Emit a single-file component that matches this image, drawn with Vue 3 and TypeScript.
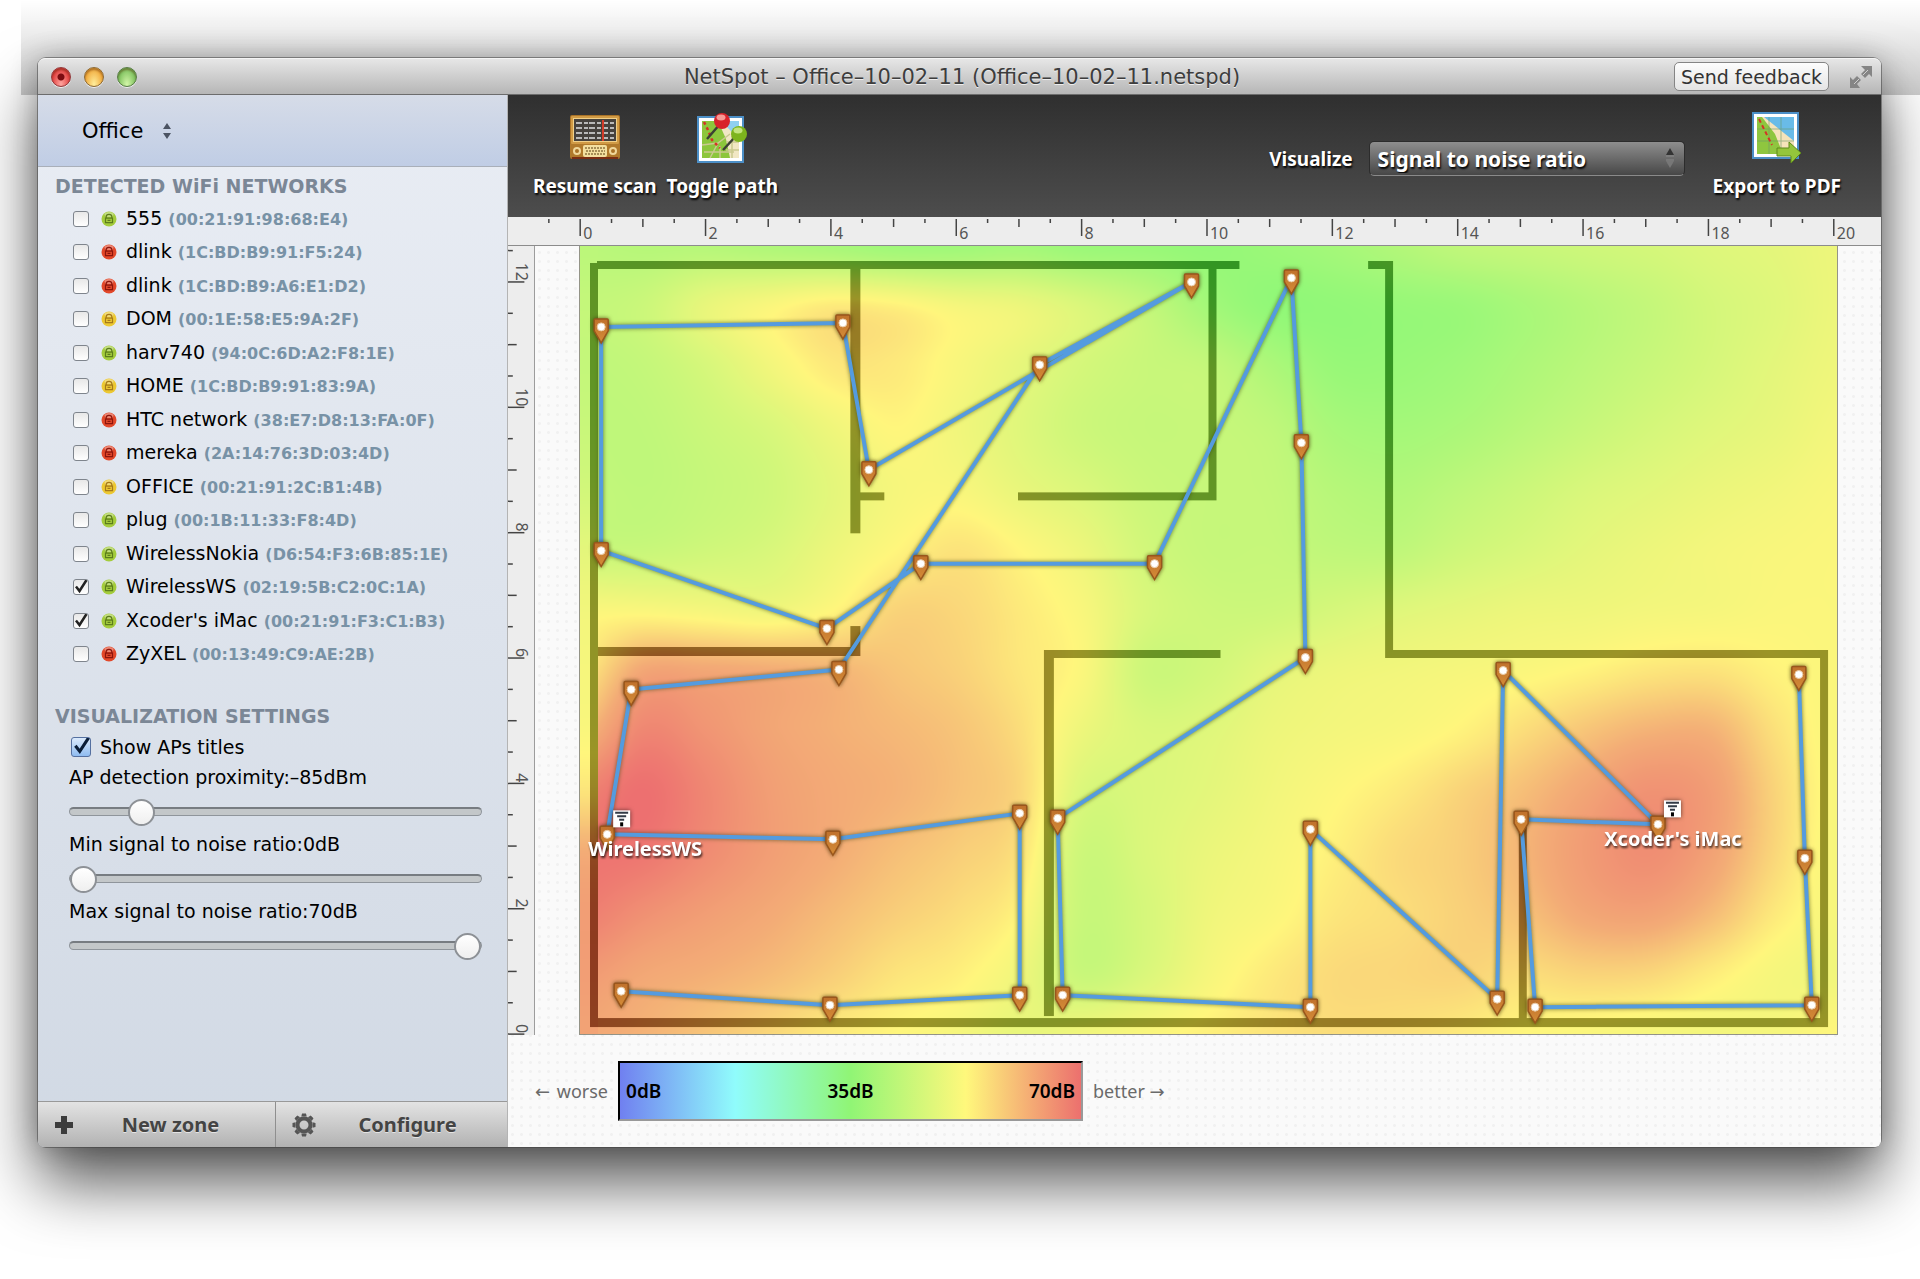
<script setup lang="ts">
import { onMounted, ref } from 'vue'

type Level = 'good' | 'fair' | 'poor'
interface Network { name: string; mac: string; level: Level; on: boolean }
type Point = [number, number]

const networks = ref<Network[]>([
  { name: '555', mac: '00:21:91:98:68:E4', level: 'good', on: false },
  { name: 'dlink', mac: '1C:BD:B9:91:F5:24', level: 'poor', on: false },
  { name: 'dlink', mac: '1C:BD:B9:A6:E1:D2', level: 'poor', on: false },
  { name: 'DOM', mac: '00:1E:58:E5:9A:2F', level: 'fair', on: false },
  { name: 'harv740', mac: '94:0C:6D:A2:F8:1E', level: 'good', on: false },
  { name: 'HOME', mac: '1C:BD:B9:91:83:9A', level: 'fair', on: false },
  { name: 'HTC network', mac: '38:E7:D8:13:FA:0F', level: 'poor', on: false },
  { name: 'mereka', mac: '2A:14:76:3D:03:4D', level: 'poor', on: false },
  { name: 'OFFICE', mac: '00:21:91:2C:B1:4B', level: 'fair', on: false },
  { name: 'plug', mac: '00:1B:11:33:F8:4D', level: 'good', on: false },
  { name: 'WirelessNokia', mac: 'D6:54:F3:6B:85:1E', level: 'good', on: false },
  { name: 'WirelessWS', mac: '02:19:5B:C2:0C:1A', level: 'good', on: true },
  { name: "Xcoder's iMac", mac: '00:21:91:F3:C1:B3', level: 'good', on: true },
  { name: 'ZyXEL', mac: '00:13:49:C9:AE:2B', level: 'poor', on: false },
])

const showTitles = ref(true)
const proximity = ref(-85)
const minRatio = ref(0)
const maxRatio = ref(70)

/* Floor plan geometry; the plan is 1260 x 790 with its origin at the top left. */
const PLAN_W = 1260
const PLAN_H = 790
const UNIT = 62.75

const walls: [number, number, number, number][] = [
  [10, 17, 8, 766], [17, 15, 644, 8], [271, 15, 10, 273], [281, 247, 24, 8],
  [10, 402, 271, 9], [271, 381, 10, 29], [439, 247, 199, 8], [630, 15, 8, 240],
  [790, 15, 25, 8], [807, 15, 8, 398], [807, 405, 444, 8], [1243, 405, 8, 378],
  [10, 774, 1241, 9], [465, 405, 10, 367], [465, 405, 177, 8], [941, 574, 8, 206],
]

const route: Point[] = [
  [42, 746], [251, 760], [441, 750], [441, 568], [254, 594], [28, 589], [52, 444],
  [260, 424], [461, 119], [613, 36], [290, 224], [264, 77], [22, 81], [22, 305],
  [248, 383], [342, 318], [576, 318], [713, 32], [723, 197], [727, 412], [479, 573],
  [484, 750], [732, 762], [732, 584], [919, 754], [925, 425], [1080, 579], [943, 574],
  [957, 762], [1234, 760], [1227, 613], [1221, 429],
]
const routePoints = route.map(p => p.join(',')).join(' ')

const accessPoints = [
  { name: 'WirelessWS', x: 43, y: 574, labelX: 66 },
  { name: "Xcoder's iMac", x: 1095, y: 564, labelX: 1095 },
]

/* Signal samples on a regular grid: 0 is green, 50 yellow, 100 red. */
const field: number[][] = [
  [20, 18, 18, 15, 12, 8, 8, 10, 6, 5, 3, 6, 10, 16, 22, 25, 28, 31, 35, 38, 42],
  [24, 27, 40, 48, 54, 52, 46, 42, 34, 24, 10, 2, 2, 4, 6, 12, 18, 24, 31, 36, 42],
  [22, 24, 32, 44, 54, 54, 47, 39, 31, 26, 24, 14, 5, 5, 8, 14, 20, 26, 32, 38, 43],
  [22, 22, 27, 33, 43, 50, 44, 36, 28, 25, 25, 22, 12, 10, 13, 19, 25, 31, 36, 40, 45],
  [24, 22, 25, 29, 38, 46, 47, 40, 34, 27, 25, 24, 18, 16, 21, 27, 33, 37, 41, 44, 47],
  [26, 26, 29, 33, 42, 50, 56, 50, 42, 30, 25, 25, 22, 22, 28, 33, 38, 42, 45, 47, 48],
  [48, 48, 46, 44, 50, 61, 60, 54, 47, 33, 28, 28, 32, 36, 39, 42, 43, 45, 46, 48, 48],
  [54, 76, 76, 74, 71, 66, 62, 55, 48, 28, 30, 38, 42, 44, 46, 48, 51, 55, 56, 51, 48],
  [70, 90, 84, 77, 73, 70, 66, 58, 42, 34, 36, 42, 45, 47, 51, 58, 66, 72, 72, 57, 47],
  [92, 100, 90, 80, 75, 72, 67, 60, 34, 34, 38, 44, 49, 54, 61, 68, 77, 85, 80, 61, 47],
  [98, 97, 88, 80, 74, 68, 63, 56, 28, 34, 41, 46, 52, 59, 63, 71, 81, 87, 78, 60, 46],
  [94, 86, 80, 75, 69, 63, 58, 50, 26, 32, 43, 48, 55, 58, 62, 67, 76, 78, 69, 54, 46],
  [82, 76, 73, 69, 63, 56, 52, 43, 26, 34, 46, 54, 59, 60, 61, 58, 61, 60, 53, 46, 44],
  [76, 72, 66, 60, 54, 50, 46, 40, 44, 48, 52, 56, 58, 57, 54, 50, 48, 46, 45, 46, 50],
]
/* Samples along the narrow strip under and outside the west wall. */
const westStrip = [20, 24, 24, 26, 30, 38, 44, 46, 48, 56, 74, 80, 80, 78]

function spline(a: number, b: number, c: number, d: number, t: number): number {
  return b + 0.5 * t * (c - a + t * (2 * a - 5 * b + 4 * c - d + t * (3 * (b - c) + d - a)))
}
function pick(row: number[], i: number): number {
  return row[Math.max(0, Math.min(row.length - 1, i))]
}
function along(row: number[], pos: number): number {
  const i = Math.floor(pos)
  return spline(pick(row, i - 1), pick(row, i), pick(row, i + 1), pick(row, i + 2), pos - i)
}

const stops = [[142, 248, 120], [255, 246, 124], [243, 172, 118], [237, 112, 112]]
const stopAt = [0, 50, 74, 100]
function colour(value: number): number[] {
  const v = Math.max(0, Math.min(100, value))
  let k = 0
  while (k < 2 && v > stopAt[k + 1]) k++
  const t = (v - stopAt[k]) / (stopAt[k + 1] - stopAt[k])
  return stops[k].map((s, n) => s + (stops[k + 1][n] - s) * t)
}

const heat = ref<HTMLCanvasElement | null>(null)
onMounted(() => {
  const ctx = heat.value?.getContext('2d')
  if (!ctx) return
  const image = ctx.createImageData(PLAN_W, PLAN_H)
  for (let y = 0; y < PLAN_H; y++) {
    const fy = (y / PLAN_H) * (field.length - 1)
    const column = field[0].map((_, c) => along(field.map(r => r[c]), fy))
    const strip = along(westStrip, fy)
    for (let x = 0; x < PLAN_W; x++) {
      const value = x < 18 ? strip : along(column, (x / PLAN_W) * (column.length - 1))
      const [r, g, b] = colour(value)
      const at = (y * PLAN_W + x) * 4
      image.data[at] = r
      image.data[at + 1] = g
      image.data[at + 2] = b
      image.data[at + 3] = 255
    }
  }
  ctx.putImageData(image, 0, 0)
  ctx.globalCompositeOperation = 'difference'
  ctx.fillStyle = 'rgb(100, 98, 85)'
  const shape = new Path2D()
  walls.forEach(([x, y, w, h]) => shape.rect(x, y, w, h))
  ctx.fill(shape)
})

const topTicks = Array.from({ length: 42 }, (_, i) => {
  const n = i - 1
  return { x: 72 + (n * UNIT) / 2, len: n % 4 === 0 ? 17 : n % 2 === 0 ? 8 : 4, label: n % 4 === 0 ? String(n / 2) : '' }
})
const sideTicks = Array.from({ length: 26 }, (_, n) => ({
  y: 789 - (n * UNIT) / 2,
  len: n % 4 === 0 ? 17 : n % 2 === 0 ? 9 : 5,
  label: n % 4 === 0 ? String(n / 2) : '',
}))
</script>

<template>
  <div class="page">
    <div class="window">
      <header class="titlebar">
        <div class="lights">
          <button class="light close" aria-label="Close"></button>
          <button class="light minimise" aria-label="Minimise"></button>
          <button class="light zoom" aria-label="Zoom"></button>
        </div>
        <h1 class="title">NetSpot – Office–10–02–11 (Office–10–02–11.netspd)</h1>
        <div class="titlebar-end">
          <button class="feedback">Send feedback</button>
          <button class="fullscreen" aria-label="Full screen">
            <svg width="24" height="24" viewBox="0 0 24 24">
              <path d="M12 1h11v11l-3-3-4 4-4-4 4-4zM1 12l3 3 4-4 4 4-4 4 3 4H1z" fill="#858585" />
              <path d="M14 10l5-5M5 19l5-5" stroke="#d0d0d0" stroke-width="1" />
            </svg>
          </button>
        </div>
      </header>

      <div class="body">
        <aside class="sidebar">
          <div class="zone">
            <select class="zone-select" aria-label="Zone"><option>Office</option></select>
            <svg class="zone-arrows" width="10" height="18" viewBox="0 0 10 18">
              <path d="M5 1l4 6H1zM5 17l4-6H1z" fill="#4b5362" />
            </svg>
          </div>

          <section class="networks">
            <h2 class="heading">DETECTED WiFi NETWORKS</h2>
            <ul class="list">
              <li v-for="n in networks" :key="n.mac">
                <label class="row">
                  <input v-model="n.on" type="checkbox" class="check" />
                  <svg class="badge" :class="n.level" width="16" height="16" viewBox="0 0 16 16">
                    <circle class="disc" cx="8" cy="8" r="7.5" />
                    <ellipse class="shine" cx="8" cy="3.5" rx="4.5" ry="2.5" />
                    <path class="lock" d="M5.2 7V5.5a2.8 2.2 0 0 1 5.6 0V7M4.5 7.2h7v4.5h-7zM6.5 9.4h3" />
                  </svg>
                  <span class="name">{{ n.name }} <span class="mac">({{ n.mac }})</span></span>
                </label>
              </li>
            </ul>
          </section>

          <section class="settings">
            <h2 class="heading">VISUALIZATION SETTINGS</h2>
            <label class="titles"><input v-model="showTitles" type="checkbox" class="check blue" />Show APs titles</label>
            <label class="setting">AP detection proximity:{{ String(proximity).replace('-', '–') }}dBm
              <input v-model.number="proximity" type="range" min="-100" max="0" />
            </label>
            <label class="setting">Min signal to noise ratio:{{ minRatio }}dB
              <input v-model.number="minRatio" type="range" min="0" max="70" />
            </label>
            <label class="setting">Max signal to noise ratio:{{ maxRatio }}dB
              <input v-model.number="maxRatio" type="range" min="0" max="70" />
            </label>
          </section>

          <footer class="actions">
            <button class="action">
              <svg width="20" height="20" viewBox="0 0 20 20"><path d="M7 1h6v6h6v6h-6v6H7v-6H1V7h6z" fill="#3c3c3c" /></svg>
              <span>New zone</span>
            </button>
            <button class="action">
              <svg width="24" height="24" viewBox="0 0 24 24">
                <path
                  d="M10 .5h4l.7 3h-5.400zM10 23.500h4l.7-3h-5.400zM.5 10v4l3 .7v-5.400zM23.500 10v4l-3 .7v-5.400zM2.500 5.300l2.800-2.800 2.800 1.800-3.800 3.800zM21.500 5.300l-2.800-2.800-2.800 1.800 3.800 3.800zM2.500 18.700l2.800 2.800 2.800-1.800-3.800-3.800zM21.500 18.700l-2.800 2.800-2.800-1.800 3.800-3.800z"
                  fill="#555"
                />
                <circle cx="12" cy="12" r="6.500" fill="none" stroke="#555" stroke-width="4" />
              </svg>
              <span>Configure</span>
            </button>
          </footer>
        </aside>

        <main class="main">
          <div class="toolbar">
            <button class="tool">
              <svg width="52" height="51" viewBox="0 0 52 51">
                <rect x="1" y="3" width="50" height="44" rx="2" fill="#a97226" />
                <rect x="2" y="4" width="48" height="28" rx="1" fill="#d09a45" />
                <rect x="4" y="6" width="44" height="24" fill="#f0cf87" />
                <rect x="5" y="7" width="42" height="22" fill="#45413d" />
                <path d="M7 11h38M7 16h38M7 21h38M7 26h38" stroke="#b9b9b9" stroke-width="2" stroke-dasharray="6 2 4 1" />
                <path d="M34 8v21" stroke="#d43c2a" stroke-width="2" />
                <rect x="1" y="32" width="50" height="13" fill="#b0792b" />
                <rect x="14" y="33" width="24" height="12" rx="2" fill="#f3df9f" />
                <path d="M16 36h20M17 39h19M16 42h20" stroke="#8d7440" stroke-width="1.500" stroke-dasharray="2 1" />
                <circle cx="8" cy="39" r="4" fill="#f0d79a" /><circle cx="8" cy="39" r="2" fill="#a97226" />
                <circle cx="44" cy="39" r="4" fill="#f0d79a" /><circle cx="44" cy="39" r="2" fill="#a97226" />
                <path d="M3 46h46" stroke="#7a2d12" stroke-width="2" />
              </svg>
              Resume scan
            </button>
            <button class="tool">
              <svg width="52" height="51" viewBox="0 0 52 51">
                <rect x="2" y="5" width="45" height="45" fill="#fff" stroke="#4c8fc7" stroke-width="2" />
                <rect x="6" y="9" width="37" height="37" fill="#f1e7c4" />
                <path d="M24 9h19v18L30 14z" fill="#8fd0f2" />
                <path d="M6 9h16l8 18 4 19H6z" fill="#8cc63c" />
                <path d="M6 33l16-2 12-9M14 46l8-15M30 30h13M30 38h13M36 24v22M24 46V34M8 40h30" stroke="#c9c98f" stroke-width="1.500" fill="none" />
                <path d="M8 10l4 8 4 10 8 8" stroke="#d33426" stroke-width="2.500" fill="none" stroke-dasharray="3 3" />
                <path d="M24 12L11 27M40 24L27 38" stroke="#3b4034" stroke-width="2.500" />
                <circle cx="26" cy="9" r="8" fill="#d8232b" /><ellipse cx="25" cy="5.500" rx="4.500" ry="3" fill="#f69a95" />
                <circle cx="43" cy="22" r="8" fill="#7db41d" /><ellipse cx="42" cy="18.500" rx="4.500" ry="3" fill="#c3e47f" />
              </svg>
              Toggle path
            </button>
            <label class="visualize">Visualize
              <span class="picker">
                <select class="mode"><option>Signal to noise ratio</option><option>Signal level</option></select>
                <svg class="picker-arrows" width="10" height="24" viewBox="0 0 10 24">
                  <path d="M5 2l4 7H1z" fill="#333" /><path d="M5 22l4-7H1z" fill="#777" />
                  <path d="M1 10h8M1 14h8" stroke="#8a8a8a" />
                </svg>
              </span>
            </label>
            <button class="tool">
              <svg width="52" height="51" viewBox="0 0 52 51">
                <rect x="2" y="1" width="45" height="45" fill="#fff" stroke="#4c8fc7" stroke-width="2" />
                <rect x="6" y="5" width="37" height="37" fill="#69bbe8" />
                <path d="M13 5l30 24v13H6V5z" fill="#f6e3bb" />
                <path d="M6 5h5l13 17 8 20H6z" fill="#8fc63f" />
                <path d="M6 17h37M6 29h37M18 5v37M30 5v37" stroke="#6d9a68" stroke-width="1" opacity=".6" />
                <path d="M8 7l5 10 8 16" stroke="#d33426" stroke-width="2" fill="none" stroke-dasharray="4 3" />
                <path d="M26 36h12v-6l12 11-10 10v-7H26z" fill="#94c53b" stroke="#5f8a1a" />
              </svg>
              Export to PDF
            </button>
          </div>

          <svg class="ruler-top" viewBox="0 0 1374 28">
            <g v-for="t in topTicks" :key="t.x">
              <line :x1="t.x" :x2="t.x" y1="2" :y2="2 + t.len" stroke="#444" stroke-width="1.500" />
              <text v-if="t.label" :x="t.x + 3" y="22">{{ t.label }}</text>
            </g>
          </svg>

          <div class="stage">
            <svg class="ruler-side" viewBox="0 0 27 790" preserveAspectRatio="none">
              <g v-for="t in sideTicks" :key="t.y">
                <line x1="0" :x2="t.len" :y1="t.y" :y2="t.y" stroke="#444" stroke-width="1.500" />
                <text v-if="t.label" text-anchor="end" :transform="`translate(8 ${t.y - 1}) rotate(90)`">{{ t.label }}</text>
              </g>
            </svg>
            <div class="plan">
              <canvas ref="heat" class="heat" :width="PLAN_W" :height="PLAN_H"></canvas>
              <svg class="overlay" :viewBox="`0 0 ${PLAN_W} ${PLAN_H}`">
                <defs>
                  <linearGradient id="pinFill" x1="0" y1="0" x2="0" y2="1">
                    <stop offset="0" stop-color="#c0712c" /><stop offset="1" stop-color="#d48c38" />
                  </linearGradient>
                </defs>
                <polyline class="route" :points="routePoints" />
                <g v-for="([x, y], i) in route" :key="i" class="pin" :transform="`translate(${x} ${y})`">
                  <path d="M-7-7q0-1 1-1H6q1 0 1 1V4L0 16-7 4z" fill="url(#pinFill)" stroke="#99561c" stroke-width="1.500" />
                  <circle r="4" fill="#fff" stroke="#e8c9a4" />
                </g>
                <g v-for="a in accessPoints" :key="a.name">
                  <g :transform="`translate(${a.x} ${a.y})`">
                    <rect class="ap" x="-9" y="-9" width="17" height="17" fill="#fff" />
                    <path d="M-7-6.500H6M-5-3H4M-3 .5H2" stroke="#333b47" stroke-width="2" />
                    <rect x="-2" y="3" width="3" height="4" fill="#000" />
                  </g>
                  <text v-if="showTitles" class="ap-title" :x="a.labelX" :y="a.y + 37" text-anchor="middle">{{ a.name }}</text>
                </g>
              </svg>
            </div>
          </div>

          <div class="legend">
            <span class="hint"><span class="arrow">←</span> worse</span>
            <div class="scale"><span>0dB</span><span>35dB</span><span>70dB</span></div>
            <span class="hint">better <span class="arrow">→</span></span>
          </div>
        </main>
      </div>
    </div>
  </div>
</template>

<style>
body {
  background: #fff;
}
</style>

<style scoped>
* {
  box-sizing: border-box;
}
.page {
  overflow: hidden;
  padding: 58px 39px 132px 38px;
  font-family: "Noto Sans", "Open Sans", sans-serif;
  font-size: 20px;
  line-height: 26px;
  color: #000;
}
button, select, input {
  font: inherit;
  margin: 0;
}
button {
  border: 0;
  padding: 0;
  background: none;
}
.window {
  position: relative;
  border-radius: 8px;
  box-shadow: 0 0 0 1px rgba(60, 60, 60, 0.5), 0 36px 64px rgba(0, 0, 0, 0.66), 0 0 28px rgba(0, 0, 0, 0.24);
}
.window::before {
  content: "";
  position: absolute;
  z-index: -1;
  inset: -58px -39px auto -17px;
  height: 95px;
  background: linear-gradient(rgba(0, 0, 0, 0), rgba(0, 0, 0, 0.2));
}
.titlebar {
  display: grid;
  grid-template-columns: 1fr auto 1fr;
  align-items: center;
  height: 37px;
  padding: 0 8px 0 13px;
  border-radius: 7px 7px 0 0;
  border-top: 1px solid #f4f4f4;
  border-bottom: 1px solid #6c6c6c;
  background: linear-gradient(#e6e6e6, #b6b6b6);
}
.lights {
  display: flex;
  gap: 13px;
}
.light {
  width: 20px;
  height: 20px;
  border-radius: 50%;
  border: 1px solid #8d6a35;
  box-shadow: inset 0 2px 2px rgba(80, 30, 0, 0.4), 0 1px 0 #f0f0f0;
}
.close {
  border-color: #94383a;
  background: radial-gradient(circle, #7c0c10 3px, transparent 4px), radial-gradient(ellipse at 50% 90%, #ffa6a0, #e2413f 70%);
}
.minimise {
  background: radial-gradient(ellipse at 50% 90%, #ffee9c, #f0a636 75%);
}
.zoom {
  border-color: #577c45;
  background: radial-gradient(ellipse at 50% 90%, #d3f6a8, #77bd58 75%);
}
.title {
  margin: 0;
  font-family: "DejaVu Sans", sans-serif;
  font-size: 21px;
  font-weight: 400;
  color: #3d3d3d;
  text-shadow: 0 1px 0 #eee;
}
.titlebar-end {
  display: flex;
  justify-content: flex-end;
  align-items: center;
  gap: 20px;
}
.feedback {
  width: 155px;
  height: 29px;
  border: 1px solid #858585;
  border-radius: 5px;
  background: linear-gradient(#fdfdfd, #e4e4e4);
  font-family: "DejaVu Sans", sans-serif;
  font-size: 19px;
  color: #333;
  line-height: 26px;
  white-space: nowrap;
}
.fullscreen {
  display: flex;
}
.body {
  display: flex;
}
.sidebar {
  flex: 0 0 469px;
  display: flex;
  flex-direction: column;
  border-right: 1px solid #b4b4b4;
  border-radius: 0 0 0 6px;
  background: linear-gradient(#e9edf4, #d1d9e4);
  font-family: "DejaVu Sans", sans-serif;
  font-size: 19px;
}
.zone {
  display: flex;
  align-items: center;
  gap: 8px;
  height: 72px;
  padding-left: 44px;
  border-bottom: 1px solid #a9afb9;
  background: linear-gradient(#d6dce8, #c0cde5);
}
.zone-select {
  appearance: none;
  width: 72px;
  padding: 0;
  border: 0;
  background: none;
  color: #000;
  font-size: 21px;
}
.networks {
  padding: 6px 0 0 35px;
}
.heading {
  margin: 0 0 0 -18px;
  font-size: 19px;
  line-height: 26px;
  font-weight: 700;
  color: #7b8796;
}
.list {
  display: grid;
  grid-auto-rows: 1fr;
  height: 469px;
  margin: 3px 0 0;
  padding: 0;
  list-style: none;
}
.row {
  display: flex;
  align-items: center;
  height: 100%;
}
.check {
  appearance: none;
  flex: none;
  width: 16px;
  height: 16px;
  border: 1px solid #7f858d;
  border-radius: 3px;
  background: linear-gradient(#e8e8e8, #fff);
}
.check:checked {
  background: url("data:image/svg+xml,%3Csvg xmlns='http://www.w3.org/2000/svg' viewBox='0 0 16 16'%3E%3Cpath d='M3 7.500l3.500 4.500L13.500 1' fill='none' stroke='%23222' stroke-width='2.500'/%3E%3C/svg%3E") center / 16px no-repeat, linear-gradient(#e8e8e8, #fff);
}
.badge {
  margin: 0 9px 0 12px;
}
.disc {
  fill: #a4cc3c;
}
.shine {
  fill: #fff;
  opacity: 0.35;
}
.lock {
  fill: none;
  stroke: #5c7c1c;
  stroke-width: 1.2;
}
.fair .disc {
  fill: #ecc832;
}
.fair .lock {
  stroke: #a5791a;
}
.poor .disc {
  fill: #e2482a;
}
.poor .lock {
  stroke: #8c150c;
}
.name {
  white-space: pre;
}
.mac {
  font-size: 16px;
  font-weight: 700;
  color: #7892a6;
}
.settings {
  display: flex;
  flex-direction: column;
  padding: 32px 25px 0 35px;
}
.titles {
  display: flex;
  align-items: center;
  gap: 9px;
  height: 32px;
  margin: 2px 0 1px -2px;
}
.check.blue {
  width: 20px;
  height: 20px;
  border-color: #5570a0;
}
.check.blue:checked {
  background: url("data:image/svg+xml,%3Csvg xmlns='http://www.w3.org/2000/svg' viewBox='0 0 16 16'%3E%3Cpath d='M3.500 7l3.500 4.500L14.500 0' fill='none' stroke='%230a1e38' stroke-width='2.500'/%3E%3C/svg%3E") center / 20px no-repeat, linear-gradient(#dbeafc, #8fbcf0);
}
.setting {
  display: flex;
  flex-direction: column;
  gap: 7px;
  height: 67px;
  margin-left: -4px;
}
input[type="range"] {
  appearance: none;
  width: 413px;
  height: 28px;
  background: none;
}
input[type="range"]::-webkit-slider-runnable-track {
  height: 9px;
  border-radius: 5px;
  border: 1px solid #8f959b;
  border-top: 2px solid #777c81;
  background: #c3c7c9;
}
input[type="range"]::-webkit-slider-thumb {
  appearance: none;
  width: 27px;
  height: 27px;
  margin-top: -10px;
  border: 2px solid #8d9196;
  border-radius: 50%;
  background: linear-gradient(#fff, #efefef);
}
.actions {
  display: grid;
  grid-template-columns: 237px 1fr;
  height: 46px;
  margin-top: auto;
  border-top: 1px solid #999;
  border-radius: 0 0 0 6px;
  overflow: hidden;
}
.action {
  display: flex;
  align-items: center;
  padding: 0 8px 0 16px;
  background: linear-gradient(#e3e3e3, #b2b2b2);
  font-family: "Noto Sans", "Open Sans", sans-serif;
  font-size: 20px;
  font-weight: 700;
  color: #444;
  text-shadow: 0 1px 0 #e4e4e4;
}
.action + .action {
  border-left: 1px solid #8f8f8f;
}
.action span {
  flex: 1;
  text-align: center;
}
.main {
  flex: 1;
  min-width: 0;
  border-radius: 0 0 6px 0;
  background: radial-gradient(circle, #f1f1f1 1px, transparent 2px) 0 0 / 9px 9px, #fafafa;
}
.toolbar {
  display: flex;
  align-items: flex-start;
  gap: 10px;
  height: 122px;
  padding: 17px 40px 0 25px;
  background: linear-gradient(#2f2f2f, #4d4d4d);
  color: #fff;
  font-size: 19px;
  font-weight: 700;
  text-shadow: 1px 2px 2px #000;
}
.tool {
  display: flex;
  flex-direction: column;
  align-items: center;
  gap: 10px;
  color: #fff;
  text-shadow: inherit;
}
.visualize {
  display: flex;
  align-items: center;
  gap: 16px;
  margin: 29px 18px 0 auto;
}
.picker {
  position: relative;
}
.mode {
  appearance: none;
  width: 316px;
  height: 35px;
  padding: 0 8px;
  border: 1px solid #2c2c2c;
  border-bottom-color: #8a8a8a;
  border-radius: 5px;
  background: linear-gradient(#8e8e8e, #474747);
  color: #fff;
  font-size: 21px;
  line-height: 28px;
  text-shadow: inherit;
}
.picker-arrows {
  position: absolute;
  right: 10px;
  top: 5px;
}
.ruler-top {
  display: block;
  width: 100%;
  background: #ededed;
  border-bottom: 1px solid #8c8c8c;
}
.ruler-top text, .ruler-side text {
  font-size: 16px;
  fill: #555;
}
.stage {
  display: grid;
  grid-template-columns: 27px 1fr;
  column-gap: 44px;
  padding-right: 43px;
}
.ruler-side {
  width: 27px;
  height: 100%;
  background: #ededed;
  border-right: 1px solid #9c9c9c;
}
.plan {
  position: relative;
  line-height: 0;
}
.heat {
  width: 100%;
  border: 1px solid rgba(80, 80, 60, 0.6);
  border-top: 0;
}
.overlay {
  position: absolute;
  inset: 0;
  width: 100%;
  height: 100%;
}
.route {
  fill: none;
  stroke: #549bdf;
  stroke-width: 4;
  stroke-linejoin: round;
  filter: drop-shadow(0 0 2px rgba(60, 70, 20, 0.7));
}
.pin {
  filter: drop-shadow(0 0 2px rgba(60, 40, 0, 0.8));
}
.ap {
  filter: drop-shadow(0 0 2px rgba(0, 0, 0, 0.6));
}
.ap-title {
  font-size: 20px;
  font-weight: 700;
  fill: #fff;
  filter: drop-shadow(1px 2px 1px rgba(0, 0, 0, 0.7));
}
.legend {
  display: flex;
  align-items: center;
  gap: 10px;
  padding: 26px 0 26px 27px;
}
.hint {
  font-size: 18px;
  color: #6a6a6a;
  white-space: nowrap;
}
.arrow {
  margin-right: 2px;
  font-family: "DejaVu Sans", sans-serif;
}
.scale {
  display: grid;
  grid-template-columns: 1fr auto 1fr;
  align-items: center;
  width: 465px;
  height: 60px;
  padding: 0 6px;
  border: 2px solid #999;
  border-top-color: #000;
  border-left-color: #000;
  background: linear-gradient(90deg, #7080f0, #90fcfc 25%, #90f575 50%, #fff87c 75%, #ec706e);
  font-size: 19px;
  font-weight: 600;
}
.scale span:last-child {
  text-align: right;
}
</style>
